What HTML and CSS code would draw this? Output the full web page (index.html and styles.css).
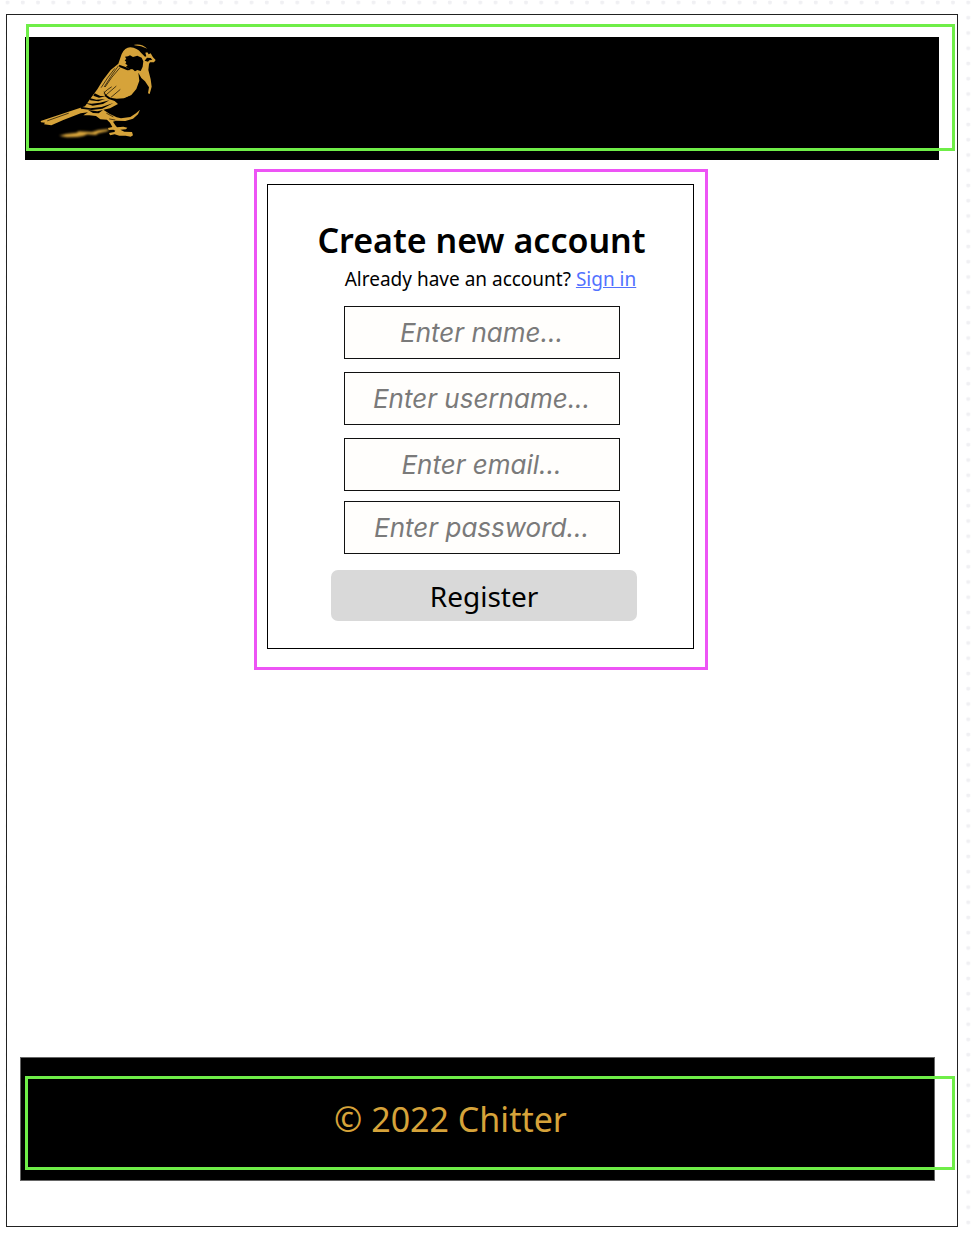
FILE: index.html
```html
<!DOCTYPE html>
<html lang="en">
<head>
<meta charset="utf-8">
<meta name="viewport" content="width=device-width, initial-scale=1">
<title>Chitter - Create new account</title>
<link rel="stylesheet" href="styles.css">
</head>
<body>
<svg class="dots" aria-hidden="true">
  <defs>
    <pattern id="dot-grid" width="15.25" height="15.25" patternUnits="userSpaceOnUse">
      <rect x="5.6" y="0.8" width="3.8" height="3.4" rx="1" fill="#f0f0f3"/>
    </pattern>
  </defs>
  <rect width="100%" height="100%" fill="url(#dot-grid)"/>
</svg>
<div class="page">
  <header class="header">
    <svg class="logo" viewBox="30 39 360 291" role="img" aria-label="Chitter">
      <defs>
        <filter id="shadow-blur" x="-10%" y="-60%" width="120%" height="220%"><feGaussianBlur stdDeviation="3"/></filter>
      </defs>
      <g fill="#d6a33a">
        <path d="M88 317 L108 312 L140 308 L146 304 L186 306 L205 300 L238 297 L232 304 L205 310 L198 315 L172 313 L160 318 L142 321 L110 322Z" filter="url(#shadow-blur)"/>
        <path d="M32 273 L120 244 L165 229 L182 205 L202 178 L219 150 L242 120 L265 101 L275 72 Q284 53 301 52 Q322 54 333 68 L345 80 L349 79 L346 68 L352 67 L356 73 L362 70 L369 82 L377 90 L372 97 L360 97 L357 102 L355 120 L362 148 L365 170 L359 192 L354 190 L357 172 L345 154 L334 144 L325 128 L328 152 L319 177 L304 195 L279 208 L250 209 L264 222 L240 235 L220 239 L238 251 L260 262 L273 265 L301 261 L318 250 L330 239 L324 253 L309 266 L286 273 L258 272 L249 275 L256 286 L261 292 L280 290 L292 293 L288 298 L271 299 L283 305 L306 306 L309 316 L302 320 L287 317 L268 317 L254 313 L240 316 L237 309 L253 306 L256 302 L250 299 L236 300 L234 294 L247 291 L240 278 L231 269 L211 268 L198 258 L178 256 L160 256 L174 247 L152 250 L100 270 L64 286 L42 283 L45 278 L33 277Z"/>
        <path d="M313 44 Q336 40 352 56 Q334 47 313 46Z"/>
      </g>
      <g fill="#000">
        <path d="M285 80 L294 79 L300 76 L309 81 L322 77 L335 83 L340 94 L338 110 L332 123 L322 120 L315 124 L308 118 L297 117 L288 110 L293 106 L286 101 L289 96 L284 91 L289 87Z"/>
        <path d="M267 104 L289 112 L303 120 L292 121 L268 111Z"/>
        <path d="M344 92 L351 83 L362 84 L367 89 L358 91 L354 95Z"/>
        <path d="M221 182 L228 194 L241 203 L260 206 L282 205 L301 197 L284 211 L257 214 L236 207 L225 199Z"/>
        <path d="M164 219 L185 221 L210 218 L238 211 L219 222 L188 227Z"/>
        <path d="M178 204 L199 209 L225 207 L205 214 L181 211Z"/>
        <path d="M194 190 L211 198 L227 199 L207 203 L190 197Z"/>
        <path d="M151 230 L181 235 L215 231 L250 219 L217 236 L185 240 L153 236Z"/>
        <path d="M174 240 L202 244 L219 240 L206 250 L189 249Z"/>
      </g>
      <g fill="none" stroke="#000" stroke-width="2" stroke-linecap="round">
        <path d="M265 108 Q242 139 223 170M254 116Q231 144 214 172M269 114Q243 142 226 170"/>
        <path d="M222 188Q232 178 244 171M229 194L258 169M243 202L270 179"/>
        <path d="M53 272L115 250M230 250L249 260M239 267L255 270"/>
      </g>
    </svg>
  </header>

  <main class="main">
    <section class="outline">
      <form class="card">
        <h1 class="title">Create new account</h1>
        <p class="hint">Already have an account? <a class="link" href="#">Sign in</a></p>
        <div class="fields">
          <input class="field" type="text" aria-label="Name" placeholder="Enter name...">
          <input class="field" type="text" aria-label="Username" placeholder="Enter username...">
          <input class="field" type="email" aria-label="Email" placeholder="Enter email...">
          <input class="field field-last" type="password" aria-label="Password" placeholder="Enter password...">
        </div>
        <button class="register" type="submit">Register</button>
      </form>
    </section>
  </main>

  <footer class="footer">
    <p class="copyright">© 2022 Chitter</p>
  </footer>
</div>
</body>
</html>
```

FILE: styles.css
```css
* {
  box-sizing: border-box;
}

body {
  margin: 0;
  min-height: 100vh;
  display: flex;
  padding: 14px 14px 7px 6px;
  background: #fff;
  color: #000;
  font-family: "Noto Sans", "Open Sans", sans-serif;
}

.dots {
  position: absolute;
  inset: 0;
  width: 100%;
  height: 100%;
  z-index: -1;
}

.page {
  flex: 1;
  display: flex;
  flex-direction: column;
  background: #fff;
  border: 1px solid #222;
}

.header {
  position: relative;
  margin: 22px 18px 0;
  padding: 6px 15px 20px;
  background: #000;
}

.header::after,
.footer::after {
  content: "";
  position: absolute;
  border: 3px solid #6fee48;
  pointer-events: none;
}

.header::after {
  inset: -13px -16px 9px 1px;
}

.logo {
  display: block;
  width: 120px;
  height: 97px;
}

.main {
  flex: 1;
  padding: 9px 12px 24px 10px;
}

.outline {
  max-width: 454px;
  margin: 0 auto;
  padding: 12px 11px 18px 10px;
  border: 3px solid #ed54f5;
}

.card {
  display: flex;
  flex-direction: column;
  align-items: center;
  padding: 32px 22px 27px 24px;
  border: 1px solid #000;
}

.title {
  margin: 0;
  font-size: 34px;
  line-height: 46px;
  font-weight: 600;
  text-align: center;
}

.hint {
  margin: 3px 0 14px;
  padding-left: 18px;
  font-size: 19px;
  line-height: 26px;
}

.link {
  color: #5271ff;
}

.fields {
  display: flex;
  flex-direction: column;
  gap: 13px;
  width: 100%;
  max-width: 276px;
}

.field {
  width: 100%;
  height: 53px;
  padding: 0 8px;
  border: 1px solid #111;
  border-radius: 0;
  background: #fffefc;
  color: #000;
  font: italic 26px/36px Inter, "Noto Sans", sans-serif;
  text-align: center;
}

.field-last {
  margin-top: -3px;
}

.field::placeholder {
  color: #7a7a7a;
  opacity: 1;
}

.register {
  width: 100%;
  max-width: 306px;
  height: 51px;
  margin: 16px 0 0 5px;
  padding: 0;
  border: 0;
  border-radius: 7px;
  background: #d9d9d9;
  color: #000;
  font: 28px/38px "Noto Sans", "Open Sans", sans-serif;
}

.footer {
  position: relative;
  margin: 0 22px 45px 13px;
  padding: 38px 54px 38px 0;
  border: 1px solid #666;
  background: #000;
}

.footer::after {
  inset: 18px -21px 10px 4px;
}

.copyright {
  margin: 0;
  color: #d6a33a;
  font-size: 34px;
  line-height: 46px;
  text-align: center;
}
```
